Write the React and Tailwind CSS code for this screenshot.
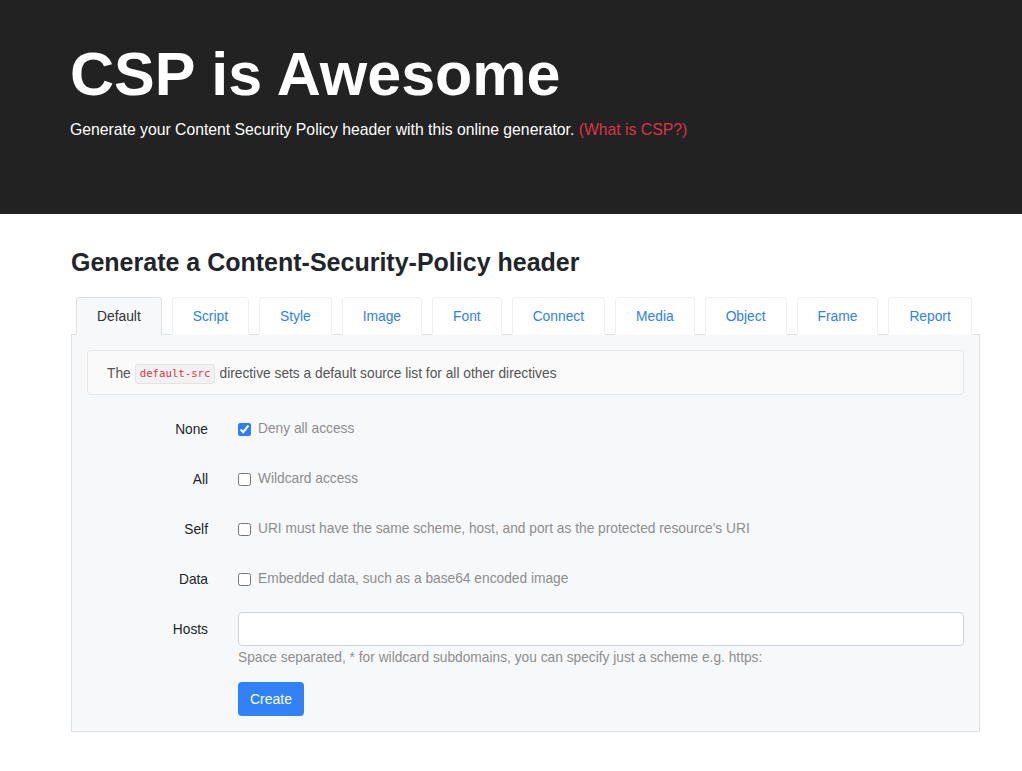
import React from 'react';

const tabs = ['Default', 'Script', 'Style', 'Image', 'Font', 'Connect', 'Media', 'Object', 'Frame', 'Report'];

const rows = [
    { label: 'None', text: 'Deny all access', checked: true },
    { label: 'All', text: 'Wildcard access', checked: false },
    { label: 'Self', text: "URI must have the same scheme, host, and port as the protected resource's URI", checked: false },
    { label: 'Data', text: 'Embedded data, such as a base64 encoded image', checked: false },
];

function Tab({ name, active }) {
    if (active) {
        return (
            <div className="mx-[5px] -mb-px rounded-t-[4px] border border-[#dde1e5] border-b-[#f7f8fa] bg-[#f7f8fa] px-5 pt-[9px] pb-[7px] text-[13.8px] leading-5 text-[#333]">
                {name}
            </div>
        );
    }
    return (
        <div className="mx-[5px] -mb-px rounded-t-[4px] border border-[#eef0f2] border-b-transparent bg-white px-5 pt-[9px] pb-[7px] text-[13.8px] leading-5 text-[#2f80ed]">
            {name}
        </div>
    );
}

export default function App() {
    return (
        <div className="min-h-screen bg-white font-['Liberation_Sans',Arial,sans-serif]">
            {/* Hero */}
            <div className="h-[214px] bg-[#222] pl-[70px] pt-[44px]">
                <h1 className="text-[61px] font-bold leading-none text-white">CSP is Awesome</h1>
                <p className="mt-[15px] text-[15.75px] leading-5 text-white">
                    Generate your Content Security Policy header with this online generator.{' '}
                    <span className="text-[#dc3545]">(What is CSP?)</span>
                </p>
            </div>

            <div className="pl-[71px] pr-[42px] pt-[33px]">
                <h3 className="text-[25px] font-bold leading-[30px] text-[#212529]">
                    Generate a Content-Security-Policy header
                </h3>

                {/* Tabs */}
                <div className="mt-[20px] flex">
                    {tabs.map((t, i) => (
                        <Tab key={t} name={t} active={i === 0} />
                    ))}
                </div>

                {/* Panel */}
                <div className="border border-[#dde1e5] bg-[#f7f8fa] p-[15px]">
                    <div className="flex h-[45px] items-center rounded-[4px] border border-[#e8e9ea] bg-[#fafafa] pl-[19px] pr-5 pt-[3px] text-[13.75px] text-[#555]">
                        The
                        <code className="mx-[4px] rounded-[3px] border border-[#e3e3e3] bg-[#f2f2f2] px-[4px] py-[1px] font-['DejaVu_Sans_Mono',monospace] text-[10.7px] leading-4 text-[#e0304a]">
                            default-src
                        </code>
                        directive sets a default source list for all other directives
                    </div>

                    <div className="mt-[17px] grid grid-cols-[121px_1fr] gap-x-[30px] gap-y-4 text-[13.75px]">
                        {rows.map((r) => (
                            <React.Fragment key={r.label}>
                                <div className="flex h-[34px] items-center justify-end pt-[2px] text-[#212529]">{r.label}</div>
                                <div className="flex h-[34px] items-center gap-[7px]">
                                    <input
                                        type="checkbox"
                                        defaultChecked={r.checked}
                                        className="m-0 h-[13px] w-[13px] accent-[#2f7ef6]"
                                    />
                                    <span className="text-[#8e8e8e]">{r.text}</span>
                                </div>
                            </React.Fragment>
                        ))}

                        <div className="flex h-[34px] items-center justify-end pt-[2px] text-[#212529]">Hosts</div>
                        <div>
                            <input
                                type="text"
                                className="block h-[34px] w-full rounded-[4px] border border-[#cfd4da] bg-white px-3 outline-none"
                            />
                            <p className="mt-[2px] leading-5 text-[#8e8e8e]">
                                Space separated, * for wildcard subdomains, you can specify just a scheme e.g. https:
                            </p>
                            <button className="mt-[14px] h-[34px] w-[66px] rounded-[4px] bg-[#3182f6] text-[14px] text-white">
                                Create
                            </button>
                        </div>
                    </div>
                </div>
            </div>
        </div>
    );
}
